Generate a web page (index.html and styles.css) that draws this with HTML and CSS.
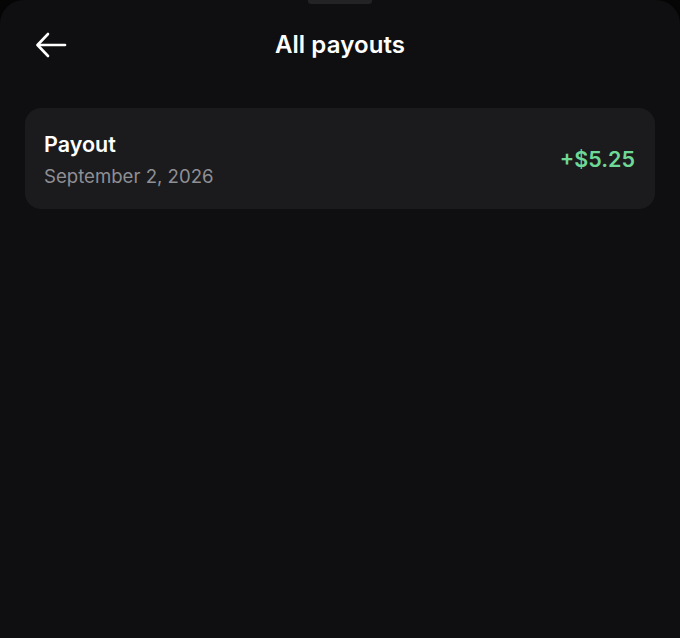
FILE: index.html
```html
<!DOCTYPE html>
<html>
<head>
<meta charset="utf-8">
<link rel="stylesheet" href="styles.css">
</head>
<body>
<div class="screen">
  <div class="handle"></div>
  <header class="topbar">
    <button class="back" aria-label="Back">
      <svg width="32" height="26" viewBox="0 0 32 26" fill="none" stroke="#fff" stroke-width="2.6" stroke-linecap="round" stroke-linejoin="round">
        <path d="M30 13H3"/>
        <path d="M13 2L2.5 13L13 24"/>
      </svg>
    </button>
    <h1 class="title">All payouts</h1>
  </header>
  <main class="list">
    <div class="card">
      <div class="info">
        <div class="label">Payout</div>
        <div class="date">September 2, 2026</div>
      </div>
      <div class="amount">+$5.25</div>
    </div>
  </main>
</div>
</body>
</html>
```

FILE: styles.css
```css
html, body {
  margin: 0;
  padding: 0;
  background: #050506;
}
.screen {
  position: relative;
  width: 680px;
  height: 638px;
  background: #0f0f11;
  border-radius: 24px 24px 0 0;
  font-family: Inter, "Noto Sans", sans-serif;
  color: #fff;
  overflow: hidden;
}
.handle {
  position: absolute;
  left: 308px;
  top: 0;
  width: 64px;
  height: 4px;
  background: #232325;
  border-radius: 0 0 3px 3px;
}
.topbar {
  display: flex;
  align-items: center;
  justify-content: center;
  position: relative;
  height: 90px;
}
.back {
  position: absolute;
  left: 35px;
  top: 32px;
  padding: 0;
  border: 0;
  background: none;
  display: flex;
}
.title {
  margin: 0;
  font-size: 24px;
  font-weight: 600;
  letter-spacing: 0.1px;
  padding-bottom: 1px;
}
.list {
  padding: 18px 25px 0;
}
.card {
  display: flex;
  align-items: center;
  justify-content: space-between;
  background: #1b1b1d;
  border-radius: 16px;
  height: 101px;
  padding: 0 20px 0 19px;
  box-sizing: border-box;
}
.info {
  display: flex;
  flex-direction: column;
  gap: 7px;
  padding-top: 2px;
}
.label {
  font-size: 21.5px;
  font-weight: 600;
  line-height: 26px;
}
.date {
  font-size: 18.6px;
  color: #8f8f95;
  line-height: 24px;
}
.amount {
  font-size: 21.5px;
  font-weight: 600;
  color: #6ed897;
}
```
